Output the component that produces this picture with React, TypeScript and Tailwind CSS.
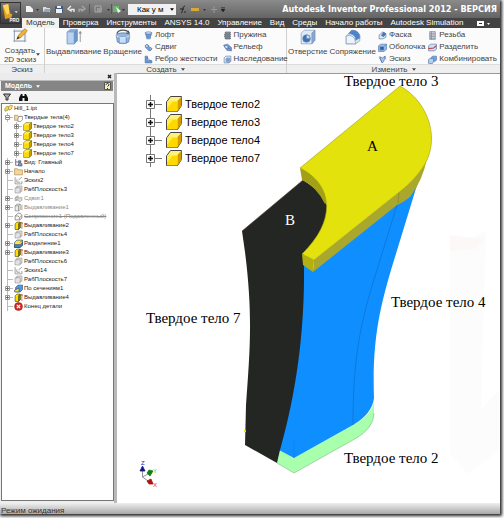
import { useState } from "react";
import type { ReactNode } from "react";

type TreeItem = {
  label: string;
  icon: string;
  level?: number;
  expand?: "+" | "-";
  muted?: boolean;
  strike?: boolean;
};

const tabs = [
  "Модель",
  "Проверка",
  "Инструменты",
  "ANSYS 14.0",
  "Управление",
  "Вид",
  "Среды",
  "Начало работы",
  "Autodesk Simulation",
];

const treeItems: TreeItem[] = [
  { label: "Hill_1.ipt", icon: "part", level: 0 },
  { label: "Твердые тела(4)", icon: "bodies", expand: "-" },
  { label: "Твердое тело2", icon: "body", level: 2, expand: "+" },
  { label: "Твердое тело3", icon: "body", level: 2, expand: "+" },
  { label: "Твердое тело4", icon: "body", level: 2, expand: "+" },
  { label: "Твердое тело7", icon: "body", level: 2, expand: "+" },
  { label: "Вид: Главный", icon: "view", expand: "+" },
  { label: "Начало", icon: "folder", expand: "+" },
  { label: "Эскиз2", icon: "sketch" },
  { label: "РабПлоскость3", icon: "plane" },
  { label: "Сдвиг1", icon: "sweep", expand: "+", muted: true },
  { label: "Выдавливание1", icon: "extrudeGray", expand: "+", muted: true },
  { label: "Сопряжение1 (Подавленный)", icon: "fillet", muted: true, strike: true },
  { label: "Выдавливание2", icon: "extrude", expand: "+" },
  { label: "РабПлоскость4", icon: "plane" },
  { label: "Разделение1", icon: "split", expand: "+" },
  { label: "Выдавливание3", icon: "extrude", expand: "+" },
  { label: "РабПлоскость6", icon: "plane" },
  { label: "Эскиз14", icon: "sketch" },
  { label: "РабПлоскость7", icon: "plane" },
  { label: "По сечениям1", icon: "loft", expand: "+" },
  { label: "Выдавливание4", icon: "extrude", expand: "+" },
  { label: "Конец детали", icon: "end" },
];

const treeIcons: Record<string, ReactNode> = {
  part: (
    <g stroke="#8a7a20" strokeWidth="1">
      <path d="M1 9l4-5 5 1-3 6-5 2z" fill="#f0d84a" />
      <path d="M8 6l3-4 4 1-2 6-4 2z" fill="#f8e97a" />
    </g>
  ),
  bodies: (
    <g stroke="#9a7b4d" strokeWidth="1">
      <path d="M1 4h5l1 2h6v7H1z" fill="#f1d7a4" />
      <path d="M7 9l3-3h5v6l-3 3H7z" fill="#fff" stroke="#555" />
    </g>
  ),
  body: (
    <g stroke="#6b6420" strokeWidth="1">
      <path d="M1 5l4-4h10v10l-4 4H1z" fill="#fff04a" />
      <path d="M11 5l4-4v10l-4 4z" fill="#c9a800" />
      <path d="M2 6h8v8H2z" fill="#ffd800" stroke="none" />
    </g>
  ),
  view: (
    <g fill="none" stroke="#446" strokeWidth="1.3">
      <path d="M3 2v11h4M3 7h4" />
      <path d="M8 10h6v4H8zM8 5h4v3H8z" fill="#7fb2e0" />
    </g>
  ),
  folder: (
    <path d="M1 3h5l1 2h8v9H1z" fill="#f3d69c" stroke="#a5814a" strokeWidth="1" />
  ),
  sketch: (
    <g fill="none" stroke="#777" strokeWidth="1.2">
      <path d="M2 2v12h12V9M5 11V6M5 11h6M8 7l6-5" />
    </g>
  ),
  plane: (
    <g fill="#eee" stroke="#8b8b8b" strokeWidth="1.2">
      <path d="M5 2h9v9H5z" />
      <path d="M2 5h9v9H2z" fillOpacity=".6" />
    </g>
  ),
  sweep: (
    <g fill="#ddd" stroke="#999" strokeWidth="1.2">
      <path d="M2 6l5-3 2 4 5-1v5l-4 3-3-3-5 1z" />
      <circle cx="5" cy="8" r="2" />
    </g>
  ),
  extrudeGray: (
    <g fill="#eee" stroke="#888" strokeWidth="1.3">
      <path d="M2 5l3-3h6v10l-3 2H2zM2 5h6v9M8 5l3-3M14 13V3" />
    </g>
  ),
  fillet: (
    <g fill="#f6f6f6" stroke="#777" strokeWidth="1.3">
      <path d="M2 7l5-5h4l3 4v5l-4 3H2zM2 7h5l3 3v4" />
      <path d="M10 10l4-4" stroke="#b66" />
    </g>
  ),
  extrude: (
    <g stroke="#55500c" strokeWidth="1.2">
      <path d="M2 5l3-3h6v10l-3 3H2z" fill="#ffe100" />
      <path d="M8 5l3-3v10l-3 3z" fill="#8d7b00" />
      <path d="M14 14V3M12 5l2-3 1 3" stroke="#c33" fill="none" />
    </g>
  ),
  split: (
    <g stroke="#27486f" strokeWidth="1.2">
      <path d="M1 6l4-4h10v9l-4 4H1z" fill="#ffe44a" />
      <path d="M1 10h10l4-4v5l-4 4H1z" fill="#3d86d0" />
      <path d="M11 6l4-4" />
    </g>
  ),
  loft: (
    <g stroke="#2b4c79" strokeWidth="1.2">
      <path d="M3 6l4-4h8v8l-4 4H3z" fill="#4e9ae6" />
      <path d="M1 11l8-4v7H1z" fill="#ffe24a" />
    </g>
  ),
  end: (
    <g>
      <circle cx="8" cy="8" r="7" fill="#d12b2b" stroke="#8a1010" />
      <path d="M5 5l6 6M11 5l-6 6" stroke="#fff" strokeWidth="2" />
    </g>
  ),
};

const toolIcons: Record<string, ReactNode> = {
  loft: (
    <g stroke="#3c649b" strokeWidth="1">
      <path d="M2 3h12l-3 9H5z" fill="#6f9cd6" />
      <ellipse cx="8" cy="3.5" rx="6" ry="2" fill="#d7e6f8" />
      <path d="M5 11h6v3H5z" fill="#a5c5ec" />
    </g>
  ),
  sweep: (
    <g stroke="#3c649b" strokeWidth="1">
      <path d="M2 5c3-4 6-2 7 1s4 1 5 4c-1 4-5 5-7 2S3 10 2 5z" fill="#7aa6dc" />
      <circle cx="5" cy="5.5" r="2.5" fill="#e1edfa" />
      <circle cx="11" cy="10.5" r="2" fill="#c1d7f2" />
    </g>
  ),
  rib: (
    <g stroke="#3c649b" strokeWidth="1">
      <path d="M2 2h4v7l8 1v4H2z" fill="#6f9cd6" />
      <path d="M6 4c1 3 3 5 6 6H6z" fill="#e1edfa" />
    </g>
  ),
  coil: (
    <g fill="none" stroke="#5f6672" strokeWidth="1.6">
      <path d="M4 2h9v2H4zM3 5.500h10v2H3zM3 9h10v2H3zM4 12.500h9v1.500H4z" fill="#aab4c4" />
    </g>
  ),
  emboss: (
    <g stroke="#3c649b" strokeWidth="1">
      <path d="M1 4l7-2 7 6v6l-8-1z" fill="#6f9cd6" />
      <path d="M3 4l5 1 1 5-5-1z" fill="#e8f1fb" />
      <path d="M9 8l4 3" stroke="#c33" />
    </g>
  ),
  derive: (
    <g stroke="#4a6a97" strokeWidth="1">
      <path d="M2 5l3-3h9v9l-3 3H2z" fill="#e4edf8" />
      <circle cx="9" cy="9" r="4" fill="#a5c5ec" />
      <path d="M7 9h4M9 7v4" />
    </g>
  ),
  chamfer: (
    <g stroke="#3c649b" strokeWidth="1">
      <path d="M2 7l6-5 6 3v6l-5 3H2z" fill="#dce9f8" />
      <path d="M6 8l4-6 4 3-4 5z" fill="#4579c2" />
    </g>
  ),
  shell: (
    <g stroke="#3c649b" strokeWidth="1">
      <path d="M1 5l4-3h10v9l-4 4H1z" fill="#9abde8" />
      <path d="M4 7h6v5H4z" fill="#3560a5" />
      <path d="M11 6l4-4" fill="none" />
    </g>
  ),
  draft: (
    <g stroke="#3c649b" strokeWidth="1">
      <path d="M3 3l5 2 5-3-3 10-3 2z" fill="#a5c5ec" />
      <path d="M2 4l5 9M12 2l2 6" fill="none" />
    </g>
  ),
  thread: (
    <g stroke="#6c7482" strokeWidth="1">
      <path d="M3 1h10v14H3z" fill="#d5dbe5" />
      <path d="M3 4h10M3 7h10M3 10h10M3 13h10M6 1v14" />
    </g>
  ),
  split: (
    <g stroke="#3c649b" strokeWidth="1">
      <path d="M1 5l4-3h10v9l-4 3H1z" fill="#cfe0f5" />
      <path d="M1 10l9-1 5-4" stroke="#c9393d" strokeWidth="2" fill="none" />
    </g>
  ),
  combine: (
    <g stroke="#3c649b" strokeWidth="1">
      <path d="M6 4l2-2h7v7l-2 2H6z" fill="#7aa6dc" />
      <path d="M1 8l2-2h7v6l-2 3H1z" fill="#b7d0f0" />
    </g>
  ),
};

const bigIcons: Record<string, ReactNode> = {
  sketch: (
    <g>
      <path d="M4 4h19v18H4z" fill="#f8fafc" stroke="#8d99a8" />
      <path d="M4 2v22M2 22h22M21 2v22M2 6h22" stroke="#8291a4" fill="none" />
      <path d="M8 19l3-7L22 1l4 4-11 11z" fill="#f3b233" stroke="#8f6b28" />
      <path d="M8 19l2-5 3 3z" fill="#333" />
    </g>
  ),
  extrude: (
    <g stroke="#6f93c4">
      <path d="M2 5l5-4h12v19l-5 5H2z" fill="#89aede" />
      <path d="M2 5h12v20H2z" fill="#b8d2f2" />
      <path d="M14 5l5-4v19l-5 5z" fill="#6c95cd" />
      <path d="M24 22V5M22 8l2-4 2 4" stroke="#555" fill="none" />
    </g>
  ),
  revolve: (
    <g stroke="#46699b">
      <path d="M2 11c0-6 23-6 23 0l-2 11c-4 3-15 3-19 0z" fill="#92b7e6" />
      <path d="M7 13h12v11H7z" fill="#c9def7" />
      <path d="M2 11c2 4 21 4 23 0" fill="none" stroke="#fff" />
      <path d="M3 8C6 0 20 0 24 7M22 3l2 4-5 0" fill="none" stroke="#555" strokeWidth="2" />
    </g>
  ),
  hole: (
    <g stroke="#6d89ad">
      <path d="M2 7l5-5h18v17l-5 6H2z" fill="#dfeaf8" />
      <path d="M20 7l5-5v17l-5 6z" fill="#8aa9d1" />
      <circle cx="11" cy="16" r="6.500" fill="#3f73b8" />
      <path d="M11 10a6 6 0 0 1 6 6h-6z" fill="#c9def7" />
    </g>
  ),
  fillet: (
    <g stroke="#6d89ad">
      <path d="M2 12l9-9h7l7 7v10l-7 5H2z" fill="#dce6f2" />
      <path d="M6 8l5-6c9 0 14 4 14 13l-7 4C18 12 14 8 6 8z" fill="#4c83cf" />
      <path d="M2 12c9-3 15 1 16 13H2z" fill="#eef3f9" />
    </g>
  ),
};

const createTools = [
  [
    { label: "Лофт", icon: "loft" },
    { label: "Сдвиг", icon: "sweep" },
    { label: "Ребро жесткости", icon: "rib" },
  ],
  [
    { label: "Пружина", icon: "coil" },
    { label: "Рельеф", icon: "emboss" },
    { label: "Наследование", icon: "derive" },
  ],
];

const modifyTools = [
  [
    { label: "Фаска", icon: "chamfer" },
    { label: "Оболочка", icon: "shell" },
    { label: "Эскиз", icon: "draft" },
  ],
  [
    { label: "Резьба", icon: "thread" },
    { label: "Разделить", icon: "split" },
    { label: "Комбинировать", icon: "combine" },
  ],
];

function Chevron({ className = "" }: { className?: string }) {
  return (
    <svg viewBox="0 0 6 4" className={`h-[3px] w-[4px] shrink-0 ${className}`}>
      <path d="M0 0h6L3 4z" fill="currentColor" />
    </svg>
  );
}

function BigButton({ icon, children }: { icon: string; children: ReactNode }) {
  return (
    <button className="flex flex-col items-center whitespace-nowrap leading-[9px]">
      <svg viewBox="0 0 27 27" className="mb-[2px] h-4 w-4">
        {bigIcons[icon]}
      </svg>
      {children}
    </button>
  );
}

function ToolColumn({ items }: { items: { label: string; icon: string }[] }) {
  return (
    <div className="flex flex-col pt-px">
      {items.map((item) => (
        <button
          key={item.label}
          className="flex h-3 items-center gap-[2px] whitespace-nowrap leading-3"
        >
          <svg viewBox="0 0 16 16" className="h-[9px] w-[9px]">
            {toolIcons[item.icon]}
          </svg>
          {item.label}
        </button>
      ))}
    </div>
  );
}

function Panel({
  title,
  menu,
  className,
  children,
}: {
  title: string;
  menu?: boolean;
  className: string;
  children: ReactNode;
}) {
  return (
    <section className={`flex flex-col border-r border-[#d0d0d0] ${className}`}>
      <div className="flex h-9 items-start">{children}</div>
      <div className="flex h-[9px] items-center justify-center gap-1 border-t border-[#dcdcdc] bg-[#efefef] leading-[9px]">
        {title}
        {menu && <Chevron />}
      </div>
    </section>
  );
}

function TitleBar() {
  return (
    <header className="flex h-[18px] items-center bg-linear-to-b from-[#8b8b8b] to-[#646464]">
      <button className="relative z-10 mt-2 h-[22px] w-[21px] shrink-0 border border-[#333] bg-linear-to-b from-[#777] to-[#3c3c3c]">
        <svg viewBox="0 0 42 44" className="h-full w-full">
          <path d="M4 5l12-3 3 20 6 3-2 7-14 3z" fill="#e7a11c" />
          <path d="M4 5l12-3 3 20-6 4z" fill="#ffd75a" />
          <path d="M30 18h7l-3 4z" fill="#eee" />
          <text x="19" y="41" fontSize="10" fontWeight="bold" fill="#fff" fontFamily="Liberation Sans">
            PRO
          </text>
        </svg>
      </button>

      {/* Quick access */}
      <div className="flex h-[14px] w-[205px] shrink-0 items-center rounded-r-sm bg-linear-to-b from-[#858585] to-[#686868]">
        <svg viewBox="0 0 105 14" className="h-[14px] w-[105px] shrink-0">
          <path d="M5 4h4l3 3v3H5z" fill="#f4f4f4" />
          <path d="M15 7h3l-1.500 2zM86 7h3l-1.500 2zM101 7h3l-1.500 2z" fill="#333" />
          <path d="M22 5h3l1 1h3v4h-7z" fill="#d9dde2" />
          <path d="M24 7h6l-2 3h-6z" fill="#8fa7c2" />
          <path d="M34 4h8v7h-8z" fill="#445a78" />
          <path d="M36 4h4v2h-4zM35 7h6v4h-6z" fill="#f0f0f0" />
          <path d="M50 4l-3 3 3 2V7.500h3V10" fill="none" stroke="#eee" strokeWidth="1.300" />
          <path d="M61 4l3 3-3 2V7.500h-3V10" fill="none" stroke="#a6a6a6" strokeWidth="1.300" />
          <path d="M68.500 2v10M90.500 2v10" stroke="#555" />
          <path d="M74 4h6v6h-6z" fill="#777" stroke="#aaa" />
          <path d="M76 6h5v4h-5z" fill="#999" />
          <path d="M92 4h6v6h-6z" fill="#65b768" />
          <path d="M95 5l5 4-3 2z" fill="#f4f4f4" />
        </svg>
        <div className="relative ml-[2px] w-[48px]">
          <select
            aria-label="Материал"
            className="block h-[11px] w-full appearance-none bg-[#f1f1f1] pl-[9px] text-[8px] leading-[11px] text-black outline-none"
          >
            <option>Как у м</option>
          </select>
          <Chevron className="absolute right-[2px] top-1 text-black" />
        </div>
        <svg viewBox="0 0 50 14" className="h-[14px] w-[50px] shrink-0">
          <path d="M5 11c2 0 1-7 4-7M4 7h4M8 10h2" stroke="#222" fill="none" />
          <path d="M15 6h8v3h-8z" fill="#d8a938" />
          <path d="M27 7h3l-1.500 2z" fill="#333" />
          <path d="M38 4v7M35 7.500h6" stroke="#999" />
          <path d="M45 5.500h4M45 7h4l-2 3z" fill="#222" stroke="#222" strokeWidth=".5" />
        </svg>
      </div>

      <h1 className="ml-auto mr-[3px] whitespace-nowrap font-['DejaVu_Sans_Condensed','DejaVu_Sans',sans-serif] text-[9px] font-bold leading-[18px] text-white">
        Autodesk Inventor Professional 2012 - ВЕРСИЯ
      </h1>
    </header>
  );
}

function TreeRow({ item }: { item: TreeItem }) {
  const level = item.level ?? 1;
  return (
    <li
      className={`flex h-[9px] items-center leading-[9px] ${level === 2 ? "pl-3" : level === 1 ? "pl-[3px]" : "pl-[2px]"} ${item.muted ? "text-[#8a8a8a]" : "text-[#222]"} ${item.strike ? "line-through" : ""}`}
    >
      {level > 0 && (
        <svg viewBox="0 0 9 9" className="h-[9px] w-[9px] shrink-0">
          <path d="M2.500 0v9M3 4.500h5" stroke="#bbb" fill="none" />
          {item.expand && (
            <>
              <path d="M.5 2.500h4v4h-4z" fill="#fff" stroke="#999" />
              <path d={item.expand === "+" ? "M1 4.500h3M2.500 3v3" : "M1 4.500h3"} stroke="#555" strokeWidth=".8" />
            </>
          )}
        </svg>
      )}
      <svg viewBox="0 0 16 16" className="mr-px h-[9px] w-[9px] shrink-0">
        {treeIcons[item.icon]}
      </svg>
      <span className="whitespace-nowrap">{item.label}</span>
    </li>
  );
}

function Browser() {
  return (
    <aside className="flex w-[117px] shrink-0 flex-col border-r-[3px] border-[#b9b9b9] bg-[#eee]">
      <div className="flex h-2 items-center justify-end border-b border-[#bbb] bg-[#ececec] pr-[2px]">
        <button aria-label="Закрыть" className="h-[5px] w-[5px]">
          <svg viewBox="0 0 5 5" className="block">
            <path d="M1 1l3 3M4 1L1 4" stroke="#222" strokeWidth="1.500" />
          </svg>
        </button>
      </div>
      <div className="mx-px flex h-[10px] items-center gap-1 bg-[#858585] pl-1 font-['Liberation_Sans',sans-serif] text-[7px] font-bold leading-[10px] text-white">
        Модель
        <Chevron />
        <button aria-label="Справка" className="ml-auto mr-[2px] h-2 w-[7px]">
          <svg viewBox="0 0 7 8" className="block">
            <path d="M.5.5h6v7h-6z" fill="#f5f0c0" stroke="#555" />
            <path d="M2 3c0-2 3-2 3 0L3.500 4.500M3.500 6v1" stroke="#333" fill="none" />
          </svg>
        </button>
      </div>
      <div className="flex h-3 items-center gap-2 bg-[#f3f3f3] pl-[3px]">
        <button aria-label="Фильтр">
          <svg viewBox="0 0 8 8" className="h-2 w-2">
            <path d="M.5 1h7L5 4.500V7H3V4.500z" fill="#aaa" stroke="#333" />
          </svg>
        </button>
        <button aria-label="Найти">
          <svg viewBox="0 0 9 8" className="h-2 w-[9px]">
            <path d="M2 1h1.500v2h2V1H7l2 4v3H5.500V5h-2v3H0V5z" fill="#111" />
          </svg>
        </button>
      </div>
      <ul className="mb-[2px] ml-px flex-1 overflow-hidden border border-[#777] bg-white font-['Liberation_Sans',sans-serif] text-[6px]">
        {treeItems.map((item) => (
          <TreeRow key={item.label} item={item} />
        ))}
      </ul>
    </aside>
  );
}

function BodyLegend() {
  return (
    <ul className="absolute left-[29px] top-[21px] font-['Liberation_Sans',sans-serif] text-[11px] text-black">
      {["Твердое тело2", "Твердое тело3", "Твердое тело4", "Твердое тело7"].map((label) => (
        <li key={label} className="flex h-[18px] items-center whitespace-nowrap">
          <svg viewBox="0 0 18 18" className="h-[18px] w-[18px]">
            <path d="M4.500 0v18M5 9.500h11" stroke="#777" />
            <path d="M.5 5.500h8v8h-8z" fill="#fff" stroke="#777" />
            <path d="M2 9.500h5M4.500 7v5" stroke="#111" strokeWidth="1.500" />
          </svg>
          <svg viewBox="0 0 18 18" className="ml-px mr-[2px] h-[18px] w-[18px]">
            <path d="M1.500 7l4-5.500h11v9l-4 6h-11z" fill="#fff27a" stroke="#444" />
            <path d="M12.500 6l4-4.500v9l-4 6z" fill="#d29b00" />
            <path d="M2 6.500h10v10H2z" fill="#ffd800" />
            <path d="M2 6.500h6l-6 7z" fill="#fff04a" />
          </svg>
          {label}
        </li>
      ))}
    </ul>
  );
}

function Viewport() {
  return (
    <main className="relative min-w-0 flex-1 overflow-hidden border-t border-[#999] bg-white">
      <svg viewBox="117 74 383 429" className="block h-[429px] w-[383px]">
        <path d="M450 250l36-20-5 180 18-20v60l-31 24-18-20z" fill="#fdfcfc" />
        <path d="M450 235l34 4-8 10-26 2z" fill="#fdf8f8" />

        {/* Нижнее тело */}
        <path
          d="M280 450L294 458L353 425Q374 414 374 398V413Q374 429 353 440L294 473L277 463Z"
          fill="#a8ffac"
        />
        <path d="M374 413Q374 429 353 440L294 473L277 463" fill="none" stroke="#7fb883" strokeWidth=".6" />

        {/* Среднее тело */}
        <path
          d="M303 262L313 270L397 202Q413 190 421 172L391 270C380 308 372 340 374 398Q372 414 353 425L294 458L279 450C292 405 304 350 303 262Z"
          fill="#0f8fff"
        />
        <path d="M397 205L377 270C361 320 353 355 353 425" fill="none" stroke="#0b6fd0" strokeWidth=".7" />
        <path d="M294 458V440" stroke="#0b7fe6" strokeWidth=".6" />

        {/* Левое тело */}
        <path
          d="M303 180L242 231L245 252C253 315 250 350 246 405L245 445L277 463L280 450C292 408 305 345 304 265L304 254C338 225 336 200 303 180Z"
          fill="#232623"
        />
        <path d="M303 180L242 231" stroke="#6b4a4a" strokeWidth=".6" />
        <path d="M244 430h2v2h-2z" fill="#e3e20c" />

        {/* Верхнее тело */}
        <path d="M300 168L302 180Q316 186 325 204L335 195L318 172Z" fill="#a3a016" />
        <path
          d="M314 260L403 189Q422 173 427 158Q423 180 410 197Q404 202 397 205L313 272Z"
          fill="#aaa82c"
        />
        <path d="M302 254L314 260L313 272L303 265Z" fill="#b3b010" />
        <path
          d="M400 86C428 101 443 141 421 170C415 178 409 184 403 189L314 260L302 254C338 219 332 184 300 168Z"
          fill="#e3e20c"
          stroke="#a09d1a"
          strokeWidth=".6"
        />
        <path d="M399 193L398 203" stroke="#77751a" strokeWidth=".5" />

        {/* Оси координат */}
        <g fill="none" strokeWidth=".8">
          <path d="M142.500 477V469M142.500 477L148 474M142.500 477L148 481" stroke="#777" />
          <path d="M140 471l2.500-5 2.500 5z" fill="#161680" stroke="#161680" />
          <path d="M147 473l2-3 4 1-3 5z" fill="#138013" stroke="#138013" />
          <path d="M147 481l4-2 2 5-4 0z" fill="#b01212" stroke="#b01212" />
        </g>
        <g fontFamily="Liberation Sans" fontSize="6">
          <text x="141" y="465" fill="#2020d0">Z</text>
          <text x="153" y="473" fill="#40d040">Y</text>
          <text x="153" y="487" fill="#e03030">X</text>
        </g>

        <g fontFamily="Liberation Serif" fontSize="15">
          <text x="344" y="86">Твердое тело 3</text>
          <text x="391" y="307">Твердое тело 4</text>
          <text x="146" y="323">Твердое тело 7</text>
          <text x="344" y="463">Твердое тело 2</text>
          <text x="367" y="151">A</text>
          <text x="285" y="225" fill="#fff">B</text>
        </g>
      </svg>
      <BodyLegend />
    </main>
  );
}

export default function App() {
  const [activeTab, setActiveTab] = useState("Модель");

  return (
    <div className="h-screen bg-white pb-1 pr-1 font-['Liberation_Sans',sans-serif] text-[8px] text-[#444]">
      <div className="flex h-full flex-col bg-white shadow-[1px_1px_3px_1px_#222]">
        <TitleBar />

        {/* Tabs */}
        <nav className="flex h-[10px] items-center bg-[#434343] pl-[22px]">
          {tabs.map((tab) => (
            <button
              key={tab}
              onClick={() => setActiveTab(tab)}
              className={`h-[10px] whitespace-nowrap px-1 leading-[10px] ${activeTab === tab ? "bg-[#f1f1f1] text-[#333]" : "text-white"}`}
            >
              {tab}
            </button>
          ))}
          <button aria-label="Вид ленты" className="ml-auto mr-[10px]">
            <svg viewBox="0 0 13 5" className="h-[5px] w-[13px]">
              <path d="M0 0h7v5H0z" fill="#fff" />
              <path d="M2 2h3v1H2z" fill="#333" />
              <path d="M10 2h3l-1.500 2z" fill="#fff" />
            </svg>
          </button>
        </nav>

        {/* Ribbon */}
        <div className="flex bg-[#fbfbfb]">
          <Panel title="Эскиз" className="w-[45px] shrink-0">
            <div className="flex w-full items-end justify-center">
              <BigButton icon="sketch">
                <span>Создать</span>
                <span>2D эскиз</span>
              </BigButton>
              <Chevron className="mb-2" />
            </div>
          </Panel>
          <Panel title="Создать" menu className="w-[242px] shrink-0">
            <div className="flex gap-[2px] pl-px pt-px">
              <BigButton icon="extrude">Выдавливание</BigButton>
              <BigButton icon="revolve">Вращение</BigButton>
            </div>
            <div className="ml-[2px] flex gap-[5px]">
              {createTools.map((items) => (
                <ToolColumn key={items[0].label} items={items} />
              ))}
            </div>
          </Panel>
          <Panel title="Изменить" menu className="flex-1 border-r-0">
            <div className="flex gap-[2px] pl-px pt-px">
              <BigButton icon="hole">Отверстие</BigButton>
              <BigButton icon="fillet">Сопряжение</BigButton>
            </div>
            <div className="ml-[2px] flex gap-[3px]">
              {modifyTools.map((items) => (
                <ToolColumn key={items[0].label} items={items} />
              ))}
            </div>
          </Panel>
        </div>

        <div className="flex min-h-0 flex-1">
          <Browser />
          <Viewport />
        </div>

        <footer className="h-[11px] shrink-0 bg-linear-to-b from-[#efefef] to-[#a9a9a9] pl-px leading-4 text-[#333]">
          Режим ожидания
        </footer>
      </div>
    </div>
  );
}
